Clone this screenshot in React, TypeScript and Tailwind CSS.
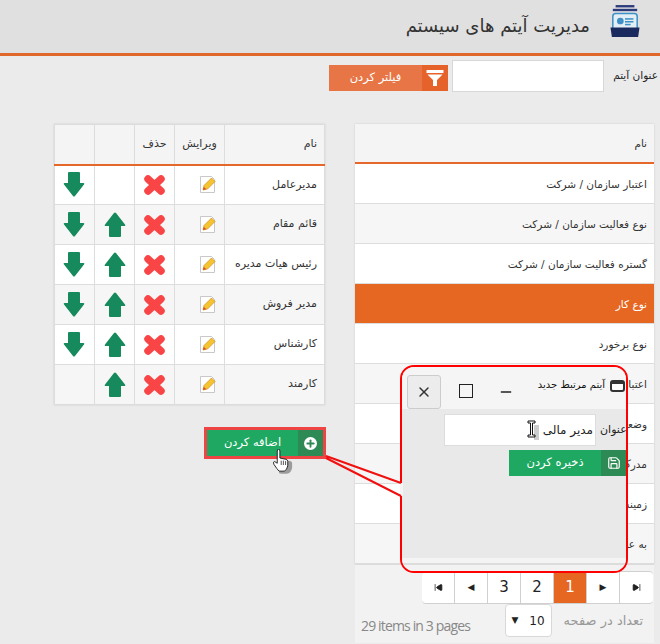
import { Plus, Save, X, Minus, SkipBack, SkipForward } from "lucide-react"

const leftRows = [
    { name: "مدیرعامل", up: false, down: true },
    { name: "قائم مقام", up: true, down: true },
    { name: "رئیس هیات مدیره", up: true, down: true },
    { name: "مدیر فروش", up: true, down: true },
    { name: "کارشناس", up: true, down: true },
    { name: "کارمند", up: true, down: false },
]

const rightRows = [
    "اعتبار سازمان / شرکت",
    "نوع فعالیت سازمان / شرکت",
    "گستره فعالیت سازمان / شرکت",
    "نوع کار",
    "نوع برخورد",
    "اعتبار",
    "وضعیت",
    "مدرک",
    "زمینه",
    "به عنوان",
]

function Logo() {
    return (
        <svg width="30" height="32" viewBox="0 0 32 34">
            <rect x="6" y="0" width="20" height="2.500" fill="#2b3a7a" />
            <rect x="3" y="4" width="26" height="2.500" fill="#2b3a7a" />
            <path d="M3 25 V12 Q3 9 6 9 H26 Q29 9 29 12 V25" fill="#e4eef5" stroke="#3d8fc6" strokeWidth="1.600" />
            <circle cx="11" cy="17" r="3.600" fill="#3d8fc6" />
            <rect x="16" y="14" width="9" height="1.600" fill="#3d8fc6" />
            <rect x="16" y="17" width="9" height="1.600" fill="#3d8fc6" />
            <rect x="16" y="20" width="6" height="1.600" fill="#3d8fc6" />
            <path d="M0.500 24 H31.500 L30 34 H2 Z" fill="#1b2a5e" />
        </svg>
    )
}

function Funnel() {
    return (
        <svg width="18" height="18" viewBox="0 0 18 18">
            <path d="M0.500 1 H17.500 V4 H0.500 Z M1.500 5.500 H16.500 L11 11 V17 H7 V11 Z" fill="#fff" />
        </svg>
    )
}

const arrowPath = "M5 1 Q5 0 6 0 H16 Q17 0 17 1 V11 H20.500 Q22 11 21 12.500 L12 24 Q11 25 10 24 L1 12.500 Q0 11 1.500 11 H5 Z"

function ArrowDown() {
    return (
        <svg width="22" height="25" viewBox="0 0 22 25" className="mx-auto block -translate-x-[1px]">
            <path d={arrowPath} fill="#168a5c" />
        </svg>
    )
}

function ArrowUp() {
    return (
        <svg width="22" height="25" viewBox="0 0 22 25" className="mx-auto block rotate-180">
            <path d={arrowPath} fill="#168a5c" />
        </svg>
    )
}

function Cross() {
    return (
        <svg width="21" height="20" viewBox="0 0 21 20" className="mx-auto block">
            <path d="M4 4 L17 16 M17 4 L4 16" stroke="#f94545" strokeWidth="7.500" strokeLinecap="round" />
        </svg>
    )
}

function EditIcon() {
    return (
        <svg width="16" height="17" viewBox="0 0 16 17" className="block">
            <path d="M0.500 0.500 H11.500 L14.500 3.500 V16.500 H0.500 Z" fill="#fff" stroke="#c8c8c8" />
            <path d="M3 14 L4 9.500 L11.500 2 L15 5.500 L7.500 13 Z" fill="#f5c431" stroke="#d1891b" strokeWidth="0.700" />
            <path d="M3 14 L3.800 11 L6.200 13 Z" fill="#d9472b" />
        </svg>
    )
}

function HandCursor() {
    return (
        <svg width="21" height="25" viewBox="0 0 24 28" className="absolute left-[65px] top-[19px]">
            <path d="M8 27 Q9 28 17 28 Q22 27 23 21 V16 Q23 13 19 13 L11 12 Z" fill="#00000055" />
            <path d="M6 2 Q6 0 7.500 0 Q9 0 9 2 V10 L16 11.500 Q18 12 18 14 V19 Q17 24 14 25 H8 Q6 23 2 17 Q1 14 3 14 L6 16 Z" fill="#fff" stroke="#111" strokeWidth="1" />
            <path d="M10.500 13 V18 M13 13 V18 M15.500 13.500 V18" stroke="#111" strokeWidth="0.800" />
        </svg>
    )
}

function IBeam() {
    return (
        <svg width="12" height="20" viewBox="0 0 12 20" className="absolute left-[527px] top-[420px]">
            <rect x="7" y="5" width="5" height="15" fill="#00000033" />
            <path d="M1 1 H8 V3 H5.500 V15 H8 V17 H1 V15 H3.500 V3 H1 Z" fill="#fff" stroke="#111" strokeWidth="1" />
        </svg>
    )
}

function PagerCell({ children, active }: { children: React.ReactNode; active?: boolean }) {
    return (
        <div className={"w-[33px] h-full flex items-center justify-center border-r border-[#d0d0d0] last:border-r-0 text-[15px] " + (active ? "bg-[#e56722] text-white" : "text-[#222]")}>
            {children}
        </div>
    )
}

export default function App() {
    return (
        <div className="relative w-[660px] h-[644px] overflow-hidden bg-[#ebebeb] font-['DejaVu_Sans',sans-serif] text-[#333]">
            <header className="h-[56px] bg-[#e0e0e0] border-b-[3px] border-[#e0682a] flex items-center justify-end pr-[20px] gap-[20px]">
                <h1 className="text-[18px] font-normal text-[#333] -mt-[3px]" dir="rtl">مدیریت آیتم های سیستم</h1>
                <div className="-mt-[11px]"><Logo /></div>
            </header>

            <div className="flex items-center justify-end h-[32px] mt-[4px] pr-[2px]">
                <button className="h-[26px] w-[119px] flex mt-[3px]">
                    <span className="flex-1 bg-[#e87545] text-white text-[11.500px] leading-[24px]">فیلتر کردن</span>
                    <span className="w-[26px] h-full bg-[#e5632a] flex items-center justify-center"><Funnel /></span>
                </button>
                <input className="w-[152px] h-[32px] bg-white border border-[#d8d8d8] ml-[4px]" />
                <label className="w-[54px] text-[10.500px] text-[#222] text-right whitespace-nowrap" dir="rtl">عنوان آیتم</label>
            </div>

            <main className="flex pl-[54px] gap-[31px] mt-[32px]">
                <div className="w-[270px]">
                    <table className="w-full table-fixed border-collapse bg-white text-[11px] shadow-[0_0_2px_#ccc]">
                        <colgroup>
                            <col className="w-[40px]" />
                            <col className="w-[40px]" />
                            <col className="w-[40px]" />
                            <col className="w-[50px]" />
                            <col className="w-[100px]" />
                        </colgroup>
                        <thead>
                            <tr className="h-[40px] bg-[#f4f4f4] border-b-2 border-[#e5682a]">
                                <th className="border border-b-0 border-[#ddd]"></th>
                                <th className="border border-b-0 border-[#ddd]"></th>
                                <th className="border border-b-0 border-[#ddd] font-normal">حذف</th>
                                <th className="border border-b-0 border-[#ddd] font-normal">ویرایش</th>
                                <th className="border border-b-0 border-[#ddd] font-normal text-right pr-[7px]">نام</th>
                            </tr>
                        </thead>
                        <tbody>
                            {leftRows.map((row, index) => (
                                <tr key={index} className={"h-[40px] " + (index % 2 == 1 ? "bg-[#f6f6f6]" : "bg-white")}>
                                    <td className="border border-[#ddd]">{row.down && <ArrowDown />}</td>
                                    <td className="border border-[#ddd]">{row.up && <ArrowUp />}</td>
                                    <td className="border border-[#ddd]"><Cross /></td>
                                    <td className="border border-[#ddd]"><div className="flex justify-end pr-[8px]"><EditIcon /></div></td>
                                    <td className="border border-[#ddd] text-right pr-[7px] whitespace-nowrap" dir="rtl">
                                        <span className="block text-right" dir="rtl">{row.name}</span>
                                    </td>
                                </tr>
                            ))}
                        </tbody>
                    </table>

                    <div className="relative mt-[22px] ml-[150px] w-[122px] h-[32px] border-[3px] border-[#ee4444] flex">
                        <span className="flex-1 bg-[#1fa862] text-white text-[11.500px] leading-[25px] text-center">اضافه کردن</span>
                        <span className="w-[25px] bg-[#2d8a55] flex items-center justify-center">
                            <span className="w-[13px] h-[13px] rounded-full bg-white flex items-center justify-center">
                                <Plus size={11} strokeWidth={4} color="#2d8a55" />
                            </span>
                        </span>
                        <HandCursor />
                    </div>
                </div>

                <div className="w-[299px]">
                    <div className="bg-white text-[10.500px] shadow-[0_0_2px_#ccc]">
                        <div className="h-[40px] bg-[#f4f4f4] border-b-2 border-[#e5682a] flex items-center justify-end pr-[7px] pt-[2px]" dir="ltr">نام</div>
                        {rightRows.map((row, index) => (
                            <div key={index} className={"h-[40px] border-b border-[#ddd] flex items-center pr-[7px] pt-[2px] justify-start " + (index == 3 ? "bg-[#e56722] text-white" : index % 2 == 1 ? "bg-[#f6f6f6]" : "bg-white")} dir="rtl">
                                <span>{row}</span>
                            </div>
                        ))}
                    </div>

                    <div className="bg-[#f2f2f2] h-[80px] -mt-[1px] border-t-2 border-[#dcdcdc]">
                        <div className="flex justify-end pt-[6px] pr-[1px]">
                            <div className="h-[33px] flex bg-white border border-x-0 border-[#d0d0d0] rounded-[4px] overflow-hidden">
                                <PagerCell><SkipBack size={9} fill="#222" /></PagerCell>
                                <PagerCell><span className="text-[9px]">◀</span></PagerCell>
                                <PagerCell>3</PagerCell>
                                <PagerCell>2</PagerCell>
                                <PagerCell active>1</PagerCell>
                                <PagerCell><span className="text-[9px]">▶</span></PagerCell>
                                <PagerCell><SkipForward size={9} fill="#222" /></PagerCell>
                            </div>
                        </div>
                        <div className="flex items-center justify-between pl-[6px] pr-[11px]">
                            <span className="text-[14px] tracking-[-0.850px] text-[#888] mt-[9px] font-['Open_Sans',sans-serif]">29 items in 3 pages</span>
                            <div className="flex items-center gap-[12px]">
                                <div className="w-[47px] h-[33px] bg-white border border-[#d8d8d8] rounded-[4px] flex items-center justify-between px-[6px] text-[12px] text-[#222]">
                                    <span className="text-[9px]">▼</span><span>10</span>
                                </div>
                                <span className="text-[13px] text-[#999]" dir="rtl">تعداد در صفحه</span>
                            </div>
                        </div>
                    </div>
                </div>
            </main>

            {/* popup window */}
            <div className="absolute left-[400px] top-[365px] w-[228px] h-[208px] rounded-[14px] border-2 border-[#f00] overflow-hidden bg-[#e9e9e9] flex flex-col">
                <div className="h-[42px] shrink-0 bg-[#f5f5f5] flex items-start pt-[8px] pl-[5px] pr-[1px]">
                    <button className="w-[34px] h-[34px] rounded-[3px] border border-[#ccc] bg-[#ececec] flex items-center justify-center">
                        <X size={16} strokeWidth={2.200} color="#333" />
                    </button>
                    <div className="ml-[18px] mt-[9px] w-[14px] h-[14px] border-[1.500px] border-[#222]"></div>
                    <Minus size={16} strokeWidth={2} color="#222" className="ml-[25px] mt-[9px]" />
                    <div className="ml-auto flex items-center gap-[5px] mt-[4px]">
                        <span className="text-[10px] text-[#111] whitespace-nowrap -mt-[3px]" dir="rtl">آیتم مرتبط جدید</span>
                        <span className="w-[15px] h-[12px] rounded-[3px] border-2 border-[#333] border-t-[4px] bg-white mt-[1px]"></span>
                    </div>
                </div>
                <div className="flex justify-end items-center mt-[5px] h-[32px]">
                    <div className="w-[152px] h-[32px] bg-white flex items-center justify-end pr-[2px] text-[12px] text-[#222] border border-[#ddd]" dir="ltr">
                        <span dir="rtl">مدیر مالی</span>
                    </div>
                    <span className="w-[30px] overflow-hidden text-[11px] text-[#222] whitespace-nowrap pl-[4px] flex justify-start" dir="ltr"><span dir="rtl">عنوان</span></span>
                </div>
                <div className="flex justify-end mt-[4px]">
                    <button className="h-[26px] w-[117px] flex">
                        <span className="flex-1 bg-[#1fa862] text-white text-[11.500px] leading-[24px]">ذخیره کردن</span>
                        <span className="w-[25px] h-full bg-[#2d8a55] flex items-center justify-center"><Save size={14} color="#fff" /></span>
                    </button>
                </div>
                <div className="flex-1"></div>
                <div className="h-[5px] bg-[#f4f4f4]"></div>
                <div className="h-[2px] bg-[#dcdcdc]"></div>
                <div className="h-[6px] bg-[#f2f2f2]"></div>
            </div>

            {/* callout lines from the add button to the popup */}
            <svg width="660" height="644" className="absolute inset-0 pointer-events-none">
                <rect x="400" y="483" width="3" height="13" fill="#f4f4f4" />
                <path d="M326 456 L401 483 M326 458 L401 496" stroke="#f01010" strokeWidth="2" fill="none" />
            </svg>
            <IBeam />
        </div>
    )
}
